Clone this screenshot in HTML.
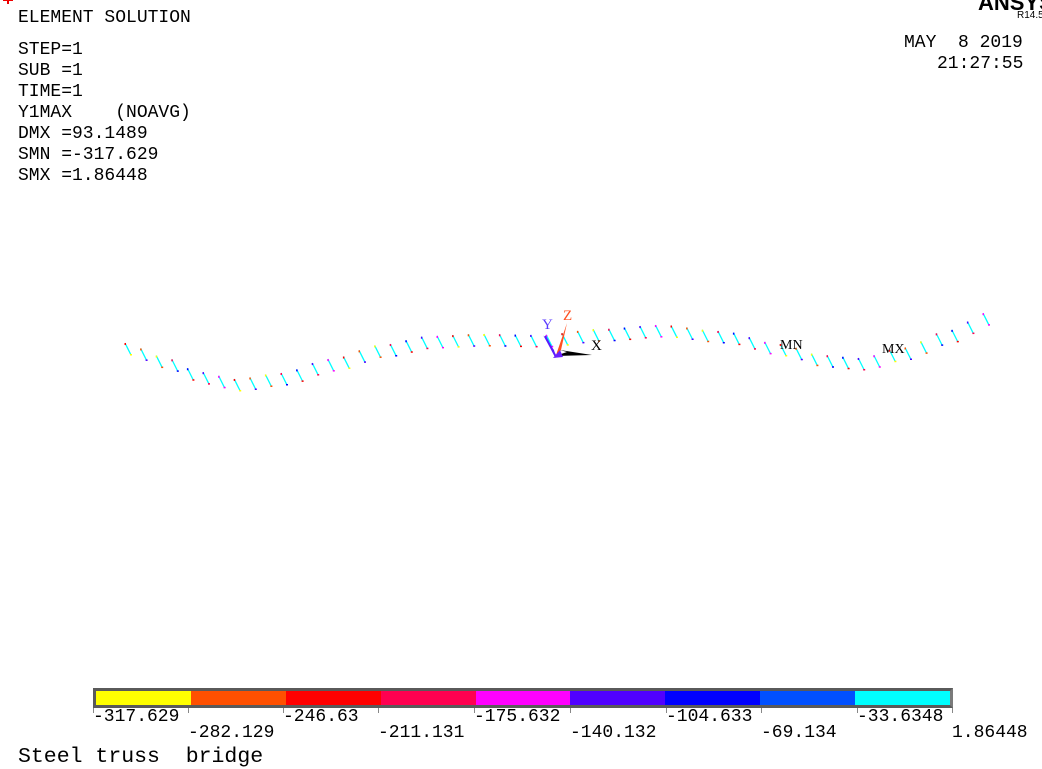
<!DOCTYPE html>
<html><head><meta charset="utf-8"><style>
html,body{margin:0;padding:0;background:#fff;}
body{width:1042px;height:769px;position:relative;overflow:hidden;font-family:"Liberation Mono","DejaVu Sans Mono",monospace;color:#000;}
.t{position:absolute;font-size:18px;line-height:18px;white-space:pre;}
.s{position:absolute;font-family:"Liberation Sans",sans-serif;white-space:pre;}
</style></head><body>
<div style="position:absolute;left:3px;top:-1px;width:10px;height:2px;background:#e00"></div>
<div style="position:absolute;left:7px;top:0;width:2px;height:4px;background:#e00"></div>
<div class="t" style="left:18px;top:9px">ELEMENT SOLUTION</div>
<div class="t" style="left:18px;top:41px">STEP=1</div>
<div class="t" style="left:18px;top:62px">SUB =1</div>
<div class="t" style="left:18px;top:83px">TIME=1</div>
<div class="t" style="left:18px;top:104px">Y1MAX    (NOAVG)</div>
<div class="t" style="left:18px;top:125px">DMX =93.1489</div>
<div class="t" style="left:18px;top:146px">SMN =-317.629</div>
<div class="t" style="left:18px;top:167px">SMX =1.86448</div>
<div class="s" style="left:978px;top:-10px;font-size:22px;font-weight:bold;">ANSYS</div>
<div class="s" style="left:1017px;top:10px;font-size:10px;">R14.5</div>
<div class="t" style="left:904px;top:34px">MAY  8 2019</div>
<div class="t" style="left:937px;top:55px">21:27:55</div>

<svg id="sv" width="1042" height="769" style="position:absolute;left:0;top:0">
<polygon points="556,358 543,335 554,350" fill="#5a1aff"/>
<line x1="556" y1="357" x2="545" y2="336" stroke="#5a1aff" stroke-width="2"/>
<polygon points="555,358 567,323 561,350" fill="#ff5020"/>
<polygon points="555,356 592,355 560,350 567,352" fill="#000"/>
<polygon points="553,358 560,350 563,357" fill="#6a20ff"/>
<text x="542" y="329" font-family="Liberation Serif,serif" font-size="15" fill="#5a3aff">Y</text>
<text x="563" y="320" font-family="Liberation Serif,serif" font-size="15" fill="#ff5020">Z</text>
<text x="591" y="350" font-family="Liberation Serif,serif" font-size="15" fill="#000">X</text>
<text x="780" y="349" font-family="Liberation Serif,serif" font-size="14" fill="#000">MN</text>
<text x="882" y="353" font-family="Liberation Serif,serif" font-size="14" fill="#000">MX</text>
</svg>

<div style="position:absolute;left:93px;top:688px;width:854px;height:14px;border:3px solid #5a5a5a;border-right-color:#7a7a7a;display:flex;">
<div style="flex:1;background:#ffff00"></div><div style="flex:1;background:#ff5000"></div><div style="flex:1;background:#ff0000"></div><div style="flex:1;background:#ff0050"></div><div style="flex:1;background:#ff00ff"></div><div style="flex:1;background:#5000ff"></div><div style="flex:1;background:#0000ff"></div><div style="flex:1;background:#0050ff"></div><div style="flex:1;background:#00ffff"></div>
</div>
<div id="ticks"></div>
<div class="t" style="left:93px;top:708px">-317.629</div>
<div class="t" style="left:188px;top:724px">-282.129</div>
<div class="t" style="left:283px;top:708px">-246.63</div>
<div class="t" style="left:378px;top:724px">-211.131</div>
<div class="t" style="left:474px;top:708px">-175.632</div>
<div class="t" style="left:570px;top:724px">-140.132</div>
<div class="t" style="left:666px;top:708px">-104.633</div>
<div class="t" style="left:761px;top:724px">-69.134</div>
<div class="t" style="left:857px;top:708px">-33.6348</div>
<div class="t" style="left:952px;top:724px">1.86448</div>
<div class="t" style="left:18px;top:747px;font-size:21.5px;line-height:20px">Steel truss  bridge</div>

<script>
var ts=[93,188,283,378,474,570,666,761,857,952],h='';
ts.forEach(function(x){h+='<div style="position:absolute;left:'+x+'px;top:708px;width:1px;height:5px;background:#888"></div>';});
document.getElementById('ticks').innerHTML=h;
var P=[[125,343],[160,356],[200,372],[235,379],[280,373],[330,359],[380,345],[430,336],[480,334],[540,335],[600,329],[660,325],[720,331],[780,344],[820,355],[860,358],[900,348],[950,330],[985,313]];
function yAt(x){for(var i=0;i<P.length-1;i++){if(x<=P[i+1][0]){var a=P[i],b=P[i+1],t=(x-a[0])/(b[0]-a[0]);t=t*t*(3-2*t);return a[1]+(b[1]-a[1])*t;}}return P[P.length-1][1];}
var cols=['#ff0000','#ff5000','#ffff00','#ff0050','#0000ff','#5000ff','#ff00ff'];
var s='';var k=0;
for(var x=125;x<=985;x+=15.6){var y=yAt(x);var c1=cols[k%7],c2=cols[(k*3+2)%7];k++;
s+='<line x1="'+x+'" y1="'+y+'" x2="'+(x+6)+'" y2="'+(y+12)+'" stroke="#00ffff" stroke-width="1.3"/>';
s+='<rect x="'+(x-0.5)+'" y="'+y+'" width="1.5" height="2" fill="'+c1+'"/>';
s+='<rect x="'+(x+5)+'" y="'+(y+11)+'" width="2" height="1.5" fill="'+c2+'"/>';}
var sv=document.getElementById('sv');sv.innerHTML=s+sv.innerHTML;
</script>
</body></html>
